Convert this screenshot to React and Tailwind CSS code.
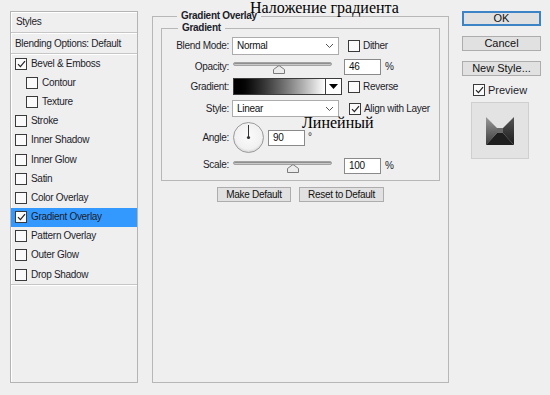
import React from 'react';

const Check = ({ checked }) => (
  <span className="w-[12px] h-[12px] border border-[#3a3a3a] bg-[#fafafa] flex items-center justify-center shrink-0">
    {checked && (
      <svg width="9" height="8" viewBox="0 0 9 8">
        <path d="M1 4.2 L3.4 6.6 L8 1.2" fill="none" stroke="#222" strokeWidth="1.2" />
      </svg>
    )}
  </span>
);

const Slider = ({ pos }) => (
  <div className="relative w-[99px] h-[16px] ml-[4px]">
    <div className="mt-[3px] h-[4px] rounded-full bg-[#c9c9c9] border border-[#a3a3a3] shadow-[inset_0_1px_0_#8f8f8f]" />
    <svg
      className="absolute top-[6px]"
      style={{ left: `${pos}%`, marginLeft: -6 }}
      width="12"
      height="9"
      viewBox="0 0 12 9"
    >
      <path d="M0.5 8.5 L0.5 4.5 L6 0.5 L11.5 4.5 L11.5 8.5 Z" fill="#ececec" stroke="#7b7b7b" />
    </svg>
  </div>
);

const Select = ({ value, h }) => (
  <div className={`w-[107px] ${h} ml-[3px] bg-white border border-[#acacac] flex items-center pl-[4px] pr-[4px] text-[#111]`}>
    <span className="flex-1">{value}</span>
    <svg width="9" height="6" viewBox="0 0 9 6">
      <path d="M1 1 L4.5 4.5 L8 1" fill="none" stroke="#555" strokeWidth="1" />
    </svg>
  </div>
);

const Field = ({ value, w = 'w-[37px]' }) => (
  <div className={`${w} h-[16px] bg-white border border-[#8a8a8a] flex items-center pl-[4px] text-[#111]`}>
    {value}
  </div>
);

const Label = ({ children }) => (
  <span className="w-[67px] text-right shrink-0 text-[#1d1d2b]">{children}</span>
);

const styles = [
  { name: 'Bevel & Emboss', checked: true },
  { name: 'Contour', indent: true },
  { name: 'Texture', indent: true },
  { name: 'Stroke' },
  { name: 'Inner Shadow' },
  { name: 'Inner Glow' },
  { name: 'Satin' },
  { name: 'Color Overlay' },
  { name: 'Gradient Overlay', checked: true, active: true },
  { name: 'Pattern Overlay' },
  { name: 'Outer Glow' },
  { name: 'Drop Shadow' },
];

const Btn = ({ children, w, primary }) => (
  <div
    className={`${w} h-[15px] flex items-center justify-center bg-[#e1e1e1] text-[#111] ${
      primary ? 'border-2 border-[#3d84c6]' : 'border border-[#adadad]'
    }`}
  >
    {children}
  </div>
);

export default function App() {
  return (
    <div className="relative w-[550px] h-[395px] overflow-hidden bg-[#efefef] flex items-start font-['Liberation_Sans',Arial,sans-serif] text-[10px] tracking-[-0.3px] leading-none text-[#1d1d2b]">
      {/* Styles list */}
      <div className="ml-[10px] mt-[11px] w-[128px] h-[372px] border border-[#b4b4b4] shadow-[inset_1px_1px_0_#fff]">
        <div className="h-[21px] flex items-center pl-[5px] border-b border-[#c6c6c6] shadow-[0_1px_0_#fff]">Styles</div>
        <div className="h-[20px] flex items-center pl-[4px] border-b border-[#c6c6c6] shadow-[0_1px_0_#fff] mt-[1px]">
          Blending Options: Default
        </div>
        <div className="border-b border-[#c6c6c6] shadow-[0_1px_0_#fff]">
          {styles.map((s) => (
            <div
              key={s.name}
              className={`h-[19.2px] flex items-center gap-[4px] ${s.indent ? 'pl-[15px]' : 'pl-[4px]'} ${
                s.active ? 'bg-[#3399ff]' : ''
              }`}
            >
              <Check checked={s.checked} />
              <span>{s.name}</span>
            </div>
          ))}
        </div>
      </div>

      {/* Gradient Overlay panel */}
      <fieldset className="ml-[14px] mt-[10px] w-[297px] h-[373px] border border-[#b7b7b7] px-[8px] pt-0">
        <legend className="ml-[16px] px-[4px] font-bold leading-[12px] text-[#1d1d2b]">Gradient Overlay</legend>
        <fieldset className="border border-[#b7b7b7] pb-[7px]">
          <legend className="ml-[16px] px-[4px] font-bold leading-[12px]">Gradient</legend>

          <div className="flex items-center h-[18px] mt-[3px]">
            <Label>Blend Mode:</Label>
            <Select value="Normal" h="h-[18px]" />
            <div className="flex items-center gap-[3px] ml-[9px]">
              <Check />
              <span>Dither</span>
            </div>
          </div>

          <div className="flex items-start h-[16px] mt-[4px]">
            <Label><span className="block mt-[3px]">Opacity:</span></Label>
            <Slider pos={46} />
            <div className="ml-[12px] flex items-center">
              <Field value="46" />
              <span className="ml-[4px]">%</span>
            </div>
          </div>

          <div className="flex items-center h-[17px] mt-[3px]">
            <Label>Gradient:</Label>
            <div className="ml-[4px] w-[109px] h-[17px] border border-[#3c3c3c] flex">
              <div className="flex-1 bg-gradient-to-r from-black to-white" />
              <div className="w-[16px] bg-white border-l border-[#3c3c3c] flex items-center justify-center">
                <svg width="9" height="5" viewBox="0 0 9 5">
                  <path d="M0 0 L9 0 L4.5 5 Z" fill="#000" />
                </svg>
              </div>
            </div>
            <div className="flex items-center gap-[3px] ml-[6px]">
              <Check />
              <span>Reverse</span>
            </div>
          </div>

          <div className="flex items-center h-[17px] mt-[5px]">
            <Label>Style:</Label>
            <Select value="Linear" h="h-[17px]" />
            <div className="flex items-center gap-[3px] ml-[10px]">
              <Check checked />
              <span>Align with Layer</span>
            </div>
          </div>

          <div className="flex items-center h-[31px] mt-[5px]">
            <Label>Angle:</Label>
            <svg className="ml-[4px]" width="31" height="31" viewBox="0 0 31 31">
              <defs>
                <radialGradient id="dial" cx="50%" cy="45%" r="55%">
                  <stop offset="0%" stopColor="#fbfbfb" />
                  <stop offset="80%" stopColor="#f1f1f1" />
                  <stop offset="100%" stopColor="#d4d4d4" />
                </radialGradient>
              </defs>
              <circle cx="15.5" cy="15.5" r="15" fill="url(#dial)" stroke="#9c9c9c" />
              <line x1="15.5" y1="15.5" x2="15.5" y2="3" stroke="#333" strokeWidth="1" />
              <circle cx="15.5" cy="15.5" r="1.6" fill="#333" />
            </svg>
            <div className="ml-[4px]">
              <Field value="90" />
            </div>
            <span className="self-start mt-[10px] ml-[3px]">°</span>
          </div>

          <div className="flex items-start h-[15px] mt-[5px]">
            <Label><span className="block mt-[2px]">Scale:</span></Label>
            <Slider pos={61} />
            <div className="ml-[12px] flex items-center">
              <Field value="100" />
              <span className="ml-[4px]">%</span>
            </div>
          </div>
        </fieldset>

        <div className="flex justify-center gap-[8px] mt-[6px]">
          <Btn w="w-[74px]">Make Default</Btn>
          <Btn w="w-[85px]">Reset to Default</Btn>
        </div>
      </fieldset>

      {/* Buttons */}
      <div className="ml-[13px] mt-[11px] w-[79px] flex flex-col text-[11px] tracking-normal">
        <Btn w="w-[79px]" primary>OK</Btn>
        <div className="mt-[10px]">
          <Btn w="w-[79px]">Cancel</Btn>
        </div>
        <div className="mt-[10px]">
          <Btn w="w-[79px]">New Style...</Btn>
        </div>
        <div className="mt-[8px] ml-[11px] flex items-center gap-[3px]">
          <Check checked />
          <span>Preview</span>
        </div>
        <div className="mt-[6px] ml-[9px] w-[58px] h-[57px] bg-[#e3e3e3] border border-[#cfcfcf] flex items-center justify-center">
          <svg width="28" height="28" viewBox="0 0 28 28">
            <defs>
              <linearGradient id="lf" x1="0" y1="0" x2="0" y2="1">
                <stop offset="0%" stopColor="#9a9a9a" />
                <stop offset="100%" stopColor="#3a3a3a" />
              </linearGradient>
              <linearGradient id="rf" x1="0" y1="0" x2="0" y2="1">
                <stop offset="0%" stopColor="#555" />
                <stop offset="100%" stopColor="#1c1c1c" />
              </linearGradient>
            </defs>
            <polygon points="0,0 11,11 11,16 0,28" fill="url(#lf)" />
            <polygon points="28,0 17,11 17,16 28,28" fill="url(#rf)" />
            <polygon points="0,28 11,16 17,16 28,28" fill="#1e1e1e" />
            <rect x="11" y="11" width="6" height="5" fill="#6a6a6a" />
          </svg>
        </div>
      </div>

      {/* Annotations */}
      <span className="absolute left-[250px] top-0 font-['Liberation_Serif',serif] text-[16px] tracking-normal text-black">
        Наложение градиента
      </span>
      <span className="absolute left-[302px] top-[115px] font-['Liberation_Serif',serif] text-[16px] tracking-normal text-black">
        Линейный
      </span>
    </div>
  );
}
